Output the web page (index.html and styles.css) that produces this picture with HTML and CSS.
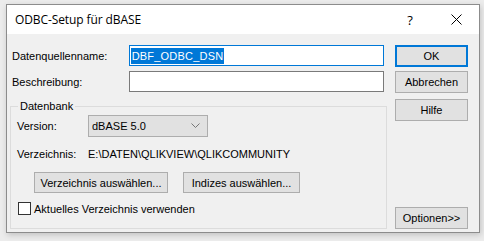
FILE: index.html
```html
<!DOCTYPE html>
<html lang="de">
<head>
<meta charset="utf-8">
<title>ODBC-Setup für dBASE</title>
<link rel="stylesheet" href="styles.css">
</head>
<body>
<div class="dialog">
  <div class="titlebar">
    <span class="title">ODBC-Setup für dBASE</span>
    <span class="help">?</span>
    <span class="close">
      <svg width="11" height="11" viewBox="0 0 11 11"><path d="M0.5 0.5 L10.5 10.5 M10.5 0.5 L0.5 10.5" stroke="#000" stroke-width="1" fill="none"/></svg>
    </span>
  </div>
  <div class="content">
    <div class="main">
      <div class="row">
        <label class="lbl">Datenquellenname:</label>
        <div class="input focused"><span class="sel">DBF_ODBC_DSN</span></div>
      </div>
      <div class="row row2">
        <label class="lbl">Beschreibung:</label>
        <div class="input"></div>
      </div>
      <fieldset class="group">
        <legend>Datenbank</legend>
        <div class="grow">
          <span class="glbl">Version:</span>
          <div class="combo"><span>dBASE 5.0</span>
            <svg width="9" height="6" viewBox="0 0 9 6"><path d="M0.5 0.5 L4.5 4.5 L8.5 0.5" stroke="#777" stroke-width="1" fill="none"/></svg>
          </div>
        </div>
        <div class="grow dir">
          <span class="glbl">Verzeichnis:</span>
          <span>E:\DATEN\QLIKVIEW\QLIKCOMMUNITY</span>
        </div>
        <div class="btnrow">
          <button class="btn wide1">Verzeichnis auswählen...</button>
          <button class="btn wide2">Indizes auswählen...</button>
        </div>
        <div class="check">
          <span class="box"></span>
          <span>Aktuelles Verzeichnis verwenden</span>
        </div>
      </fieldset>
    </div>
    <div class="side">
      <button class="btn side-btn ok">OK</button>
      <button class="btn side-btn">Abbrechen</button>
      <button class="btn side-btn">Hilfe</button>
      <div class="spacer"></div>
      <button class="btn side-btn">Optionen&gt;&gt;</button>
    </div>
  </div>
</div>
</body>
</html>
```

FILE: styles.css
```css
html, body {
  margin: 0;
  padding: 0;
}
body {
  background: #ececec;
  width: 484px;
  height: 241px;
  overflow: hidden;
  font-family: "Liberation Sans", Arial, sans-serif;
  font-size: 11px;
  color: #000;
}
.dialog {
  margin: 4px 0 0 6px;
  width: 472px;
  height: 227px;
  border: 1px solid #8c8c8c;
  background: #f0f0f0;
  box-shadow: 1px 2px 6px rgba(0,0,0,0.18);
  display: flex;
  flex-direction: column;
}
.titlebar {
  height: 29px;
  background: #fff;
  display: flex;
  align-items: center;
  flex-shrink: 0;
}
.title {
  font-family: "Open Sans", "Noto Sans", sans-serif;
  font-size: 12px;
  margin-left: 8px;
  flex: 1;
  letter-spacing: -0.1px;
}
.help {
  font-family: "Open Sans", sans-serif;
  font-size: 13px;
  width: 46px;
  text-align: center;
}
.close {
  width: 46px;
  display: flex;
  justify-content: center;
  align-items: center;
}
.content {
  flex: 1;
  display: flex;
  padding: 11px 10px 3px 5px;
}
.main {
  width: 372px;
  display: flex;
  flex-direction: column;
}
.row {
  display: flex;
  align-items: center;
  height: 21px;
}
.row2 {
  margin-top: 5px;
}
.lbl {
  width: 117px;
}
.input {
  width: 254px;
  height: 19px;
  border: 1px solid #7a7a7a;
  background: #fff;
  display: flex;
  align-items: center;
}
.input.focused {
  border-color: #0078d7;
}
.sel {
  background: #0078d7;
  color: #fff;
  margin-left: 1px;
  height: 16px;
  line-height: 16px;
  padding: 0 1px;
  font-size: 11px;
  letter-spacing: 0.2px;
}
.group {
  margin: 8px 0 0 -2px;
  width: 369px;
  border: 1px solid #dcdcdc;
  padding: 0 0 5px 6px;
  flex: 1;
  min-width: 0;
}
.group legend {
  padding: 0 2px;
  margin-left: 1px;
}
.grow {
  display: flex;
  align-items: center;
  height: 22px;
  margin-top: 3px;
}
.glbl {
  width: 71px;
}
.combo {
  display: flex;
  align-items: center;
  justify-content: space-between;
  padding: 0 7px 0 3px;
  box-sizing: border-box;
  width: 120px;
  height: 22px;
  border: 1px solid #adadad;
  background: #e1e1e1;
  font-size: 11px;
}
.dir {
  margin-top: 6px;
}
.btnrow {
  display: flex;
  gap: 15px;
  margin: 7px 0 0 17px;
}
.btn {
  font-family: "Liberation Sans", Arial, sans-serif;
  font-size: 11px;
  color: #000;
  background: #e1e1e1;
  border: 1px solid #adadad;
  height: 21px;
  padding: 0;
  margin: 0;
}
.wide1 { width: 134px; }
.wide2 { width: 117px; }
.check {
  display: flex;
  align-items: center;
  margin-top: 9px;
  margin-left: 1px;
}
.box {
  width: 11px;
  height: 11px;
  border: 1px solid #333;
  background: #fff;
  margin-right: 3px;
}
.side {
  display: flex;
  flex-direction: column;
  margin-left: 11px;
  width: 73px;
}
.side-btn {
  width: 73px;
  height: 22px;
  margin-bottom: 4px;
}
.side-btn.ok {
  border: 2px solid #0078d7;
}
.side-btn:nth-child(3) { margin-top: 2px; }
.spacer { flex: 1; }
.side-btn:last-child { margin-bottom: 0; }
```
